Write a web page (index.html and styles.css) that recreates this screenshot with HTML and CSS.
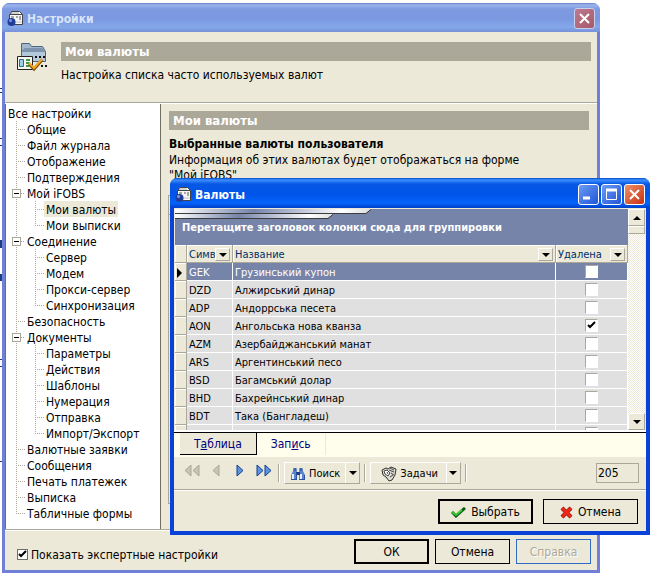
FILE: index.html
```html
<!DOCTYPE html>
<html lang="ru">
<head>
    <meta charset="UTF-8">
    <meta name="viewport" content="width=device-width, initial-scale=1.0">
    <title>Настройки</title>
    <link rel="stylesheet" href="styles.css">
</head>
<body>
    <!-- Bits of the window behind -->
    <svg class="behind" width="2" height="576" viewBox="0 0 2 576">
        <path d="M1 88v1M1 92v1M1 138v1M1 145v1M1 240v8M1 274v7M1 359v1M1 366v1M1 461v1" stroke="#1c3c80" stroke-width="2"/>
    </svg>

    <!-- Settings window -->
    <div class="window settings">
        <div class="titlebar">
            <svg class="app-icon" width="17" height="17" viewBox="0 0 17 17">
                <path d="M3.500 4.500l1-3h8l3 3" fill="#fff" stroke="#444"/>
                <path d="M2.500 4.500h13v10h-13z" fill="#f6f6f6" stroke="#444"/>
                <path d="M5 3h7" stroke="#aaa"/>
                <path d="M4 7h3M9 7h2M12 7h2M12 9h2" stroke="#555"/>
                <path d="M3 12h12" stroke="#c4c4cc"/>
                <circle cx="4.500" cy="12" r="4" fill="#223c98"/>
                <circle cx="3.500" cy="10.500" r="1.500" fill="#7c9ce4"/>
            </svg>
            <h1>Настройки</h1>
            <button class="win-btn close" aria-label="Закрыть"><svg width="13" height="13" viewBox="0 0 13 13"><path d="M2 2l9 9M11 2l-9 9" stroke="#fff" stroke-width="2"/></svg></button>
        </div>

        <div class="header">
            <svg class="header-icon" width="32" height="32" viewBox="0 0 32 32">
                <path d="M5.500 15V1.500h8l2 3h11l3 5v10h-24z" fill="#a4b8cc" stroke="#4b6682"/>
                <path d="M6 8l3-2h17l3 4H6z" fill="#7c94ac"/>
                <path d="M6 10h23v9H6z" fill="#b4c8dc"/>
                <path d="M19 15h2M23 15h2M27 15h2" stroke="#111" stroke-width="2"/>
                <path d="M1.500 14.500h15v13h-15z" fill="#f8f8ee" stroke="#222"/>
                <path d="M3.500 17.500h4v7h-4z" fill="#9cd0e8" stroke="#2c6c8c"/>
                <path d="M10 18h4M10 21h4M10 24h3" stroke="#3c9a4a" stroke-width="2"/>
                <path d="M13 22l5 5 8-9" fill="none" stroke="#7c4c08" stroke-width="3"/>
                <path d="M13 21l5 5 8-9" fill="none" stroke="#f4a824" stroke-width="2"/>
                <path d="M25 24h2M29 24h2" stroke="#111" stroke-width="2"/>
            </svg>
            <div class="header-text">
                <h2 class="caption">Мои валюты</h2>
                <p>Настройка списка часто используемых валют</p>
            </div>
        </div>

        <div class="body">
            <nav class="tree">
                <a href="#" class="root">Все настройки</a>
                <ul>
                    <li><div class="node"><a href="#">Общие</a></div></li>
                    <li><div class="node"><a href="#">Файл журнала</a></div></li>
                    <li><div class="node"><a href="#">Отображение</a></div></li>
                    <li><div class="node"><a href="#">Подтверждения</a></div></li>
                    <li>
                        <div class="node open"><button class="toggle" aria-label="Свернуть"></button><a href="#">Мой iFOBS</a></div>
                        <ul>
                            <li><div class="node"><a href="#" class="current">Мои валюты</a></div></li>
                            <li><div class="node"><a href="#">Мои выписки</a></div></li>
                        </ul>
                    </li>
                    <li>
                        <div class="node open"><button class="toggle" aria-label="Свернуть"></button><a href="#">Соединение</a></div>
                        <ul>
                            <li><div class="node"><a href="#">Сервер</a></div></li>
                            <li><div class="node"><a href="#">Модем</a></div></li>
                            <li><div class="node"><a href="#">Прокси-сервер</a></div></li>
                            <li><div class="node"><a href="#">Синхронизация</a></div></li>
                        </ul>
                    </li>
                    <li><div class="node"><a href="#">Безопасность</a></div></li>
                    <li>
                        <div class="node open"><button class="toggle" aria-label="Свернуть"></button><a href="#">Документы</a></div>
                        <ul>
                            <li><div class="node"><a href="#">Параметры</a></div></li>
                            <li><div class="node"><a href="#">Действия</a></div></li>
                            <li><div class="node"><a href="#">Шаблоны</a></div></li>
                            <li><div class="node"><a href="#">Нумерация</a></div></li>
                            <li><div class="node"><a href="#">Отправка</a></div></li>
                            <li><div class="node"><a href="#">Импорт/Экспорт</a></div></li>
                        </ul>
                    </li>
                    <li><div class="node"><a href="#">Валютные заявки</a></div></li>
                    <li><div class="node"><a href="#">Сообщения</a></div></li>
                    <li><div class="node"><a href="#">Печать платежек</a></div></li>
                    <li><div class="node"><a href="#">Выписка</a></div></li>
                    <li><div class="node"><a href="#">Табличные формы</a></div></li>
                </ul>
            </nav>

            <div class="panel">
                <h2 class="caption">Мои валюты</h2>
                <h3>Выбранные валюты пользователя</h3>
                <p>Информация об этих валютах будет отображаться на форме<br>"Мой iFOBS"</p>
                <div class="list-head"></div>
                <div class="list-box"></div>
            </div>
        </div>

        <div class="footer">
            <label class="expert"><input type="checkbox" class="check" checked>Показать экспертные настройки</label>
            <button class="btn default">ОК</button>
            <button class="btn">Отмена</button>
            <button class="btn help" disabled>Справка</button>
        </div>
    </div>

    <!-- Currency picker, floats over the settings window -->
    <div class="window dialog">
        <div class="titlebar">
            <svg class="app-icon" width="17" height="17" viewBox="0 0 17 17">
                <path d="M3.500 4.500l1-3h8l3 3" fill="#fff" stroke="#444"/>
                <path d="M2.500 4.500h13v10h-13z" fill="#f6f6f6" stroke="#444"/>
                <path d="M5 3h7" stroke="#aaa"/>
                <path d="M4 7h3M9 7h2M12 7h2M12 9h2" stroke="#555"/>
                <path d="M3 12h12" stroke="#c4c4cc"/>
                <circle cx="4.500" cy="12" r="4" fill="#223c98"/>
                <circle cx="3.500" cy="10.500" r="1.500" fill="#7c9ce4"/>
            </svg>
            <h1>Валюты</h1>
            <button class="win-btn" aria-label="Свернуть"><svg width="13" height="13" viewBox="0 0 13 13"><path d="M1 10h7" stroke="#fff" stroke-width="3"/></svg></button>
            <button class="win-btn" aria-label="Развернуть"><svg width="13" height="13" viewBox="0 0 13 13"><path d="M1 2h11" stroke="#fff" stroke-width="3"/><path d="M1.500 2v9.500h10V2" fill="none" stroke="#fff"/></svg></button>
            <button class="win-btn close" aria-label="Закрыть"><svg width="13" height="13" viewBox="0 0 13 13"><path d="M2 2l9 9M11 2l-9 9" stroke="#fff" stroke-width="2"/></svg></button>
        </div>

        <div class="grid">
            <div class="grid-main">
                <div class="group-panel">
                    <svg class="stripes" width="196" height="10" viewBox="0 0 196 10">
                        <defs>
                            <linearGradient id="stripe">
                                <stop offset="0" stop-color="#fff"/>
                                <stop offset="0.400" stop-color="#7684aa"/>
                                <stop offset="0.850" stop-color="#fff"/>
                                <stop offset="1" stop-color="#ddd"/>
                            </linearGradient>
                        </defs>
                        <path d="M0 0h196l-5 4H0z" fill="url(#stripe)"/>
                        <path d="M0 4.500h191l5-4" fill="none" stroke="#3c3c3c"/>
                        <path d="M0 5h158l-5 4H0z" fill="url(#stripe)"/>
                        <path d="M0 9.500h153l5-4" fill="none" stroke="#3c3c3c"/>
                    </svg>
                    Перетащите заголовок колонки сюда для группировки
                </div>
                <table>
                    <colgroup><col class="col-mark"><col class="col-code"><col><col class="col-deleted"></colgroup>
                    <thead>
                        <tr>
                            <th></th>
                            <th><div class="th"><span>Симв</span><button class="drop" aria-label="Фильтр"></button></div></th>
                            <th><div class="th"><span>Название</span><button class="drop" aria-label="Фильтр"></button></div></th>
                            <th><div class="th"><span>Удалена</span><button class="drop" aria-label="Фильтр"></button></div></th>
                        </tr>
                    </thead>
                    <tbody>
                        <tr class="selected"><td class="mark"></td><td>GEK</td><td>Грузинський купон</td><td><input type="checkbox" class="check" aria-label="GEK"></td></tr>
                        <tr><td></td><td>DZD</td><td>Алжирський динар</td><td><input type="checkbox" class="check" aria-label="DZD"></td></tr>
                        <tr><td></td><td>ADP</td><td>Андоррська песета</td><td><input type="checkbox" class="check" aria-label="ADP"></td></tr>
                        <tr><td></td><td>AON</td><td>Ангольська нова кванза</td><td><input type="checkbox" class="check" aria-label="AON" checked></td></tr>
                        <tr><td></td><td>AZM</td><td>Азербайджанський манат</td><td><input type="checkbox" class="check" aria-label="AZM"></td></tr>
                        <tr><td></td><td>ARS</td><td>Аргентинський песо</td><td><input type="checkbox" class="check" aria-label="ARS"></td></tr>
                        <tr><td></td><td>BSD</td><td>Багамський долар</td><td><input type="checkbox" class="check" aria-label="BSD"></td></tr>
                        <tr><td></td><td>BHD</td><td>Бахрейнський динар</td><td><input type="checkbox" class="check" aria-label="BHD"></td></tr>
                        <tr><td></td><td>BDT</td><td>Така (Бангладеш)</td><td><input type="checkbox" class="check" aria-label="BDT"></td></tr>
                        <tr><td></td><td></td><td></td><td><input type="checkbox" class="check" aria-label="Удалена"></td></tr>
                    </tbody>
                </table>
            </div>
            <div class="scrollbar">
                <button class="scroll-btn up" aria-label="Вверх"></button>
                <div class="thumb"></div>
                <div class="track"></div>
                <button class="scroll-btn down" aria-label="Вниз"></button>
            </div>
        </div>

        <div class="tabs">
            <button class="tab active">Т<u>а</u>блица</button>
            <button class="tab">Зап<u>и</u>сь</button>
        </div>

        <div class="toolbar">
            <button class="nav-btn" aria-label="Первая" disabled><svg width="16" height="13" viewBox="0 0 16 13"><path d="M7 1v11L1 6.500zM15 1v11L9 6.500z"/></svg></button>
            <button class="nav-btn" aria-label="Предыдущая" disabled><svg width="16" height="13" viewBox="0 0 16 13"><path d="M11 1v11L5 6.500z"/></svg></button>
            <button class="nav-btn" aria-label="Следующая"><svg width="16" height="13" viewBox="0 0 16 13"><path d="M5 1v11l6-5.500z"/></svg></button>
            <button class="nav-btn" aria-label="Последняя"><svg width="16" height="13" viewBox="0 0 16 13"><path d="M1 1v11l6-5.500zM9 1v11l6-5.500z"/></svg></button>
            <span class="sep"></span>
            <div class="split search">
                <button class="split-main">
                    <svg width="16" height="14" viewBox="0 0 16 14">
                        <path d="M4 1h2l1 4v8H1V8l2-4zM10 1h2l1 3 2 4v5H9V5z" fill="#5c84cc"/>
                        <path d="M6 5h4v3H6z" fill="#1c3c80"/>
                        <path d="M3.500 1h3v3h-3zM9.500 1h3v3h-3z" fill="#3c64ac"/>
                        <path d="M3 7v5M11 7v5" stroke="#e4eeff" stroke-width="2"/>
                        <path d="M1 12.500h6M9 12.500h6M6.500 6v7M14.500 8v5" stroke="#2c50a0"/>
                    </svg>
                    Поиск
                </button>
                <button class="split-drop" aria-label="Поиск: меню"></button>
            </div>
            <span class="sep"></span>
            <div class="split tasks">
                <button class="split-main">
                    <svg width="16" height="16" viewBox="0 0 16 16">
                        <path d="M1 4l4-2 2 1 3-2 5 2-1 6-3 5-3 1-3-4-3-2z" fill="#dcdcd4" stroke="#333"/>
                        <path d="M3 5l3-1 3 3-2 3-3-2z" fill="#fff" stroke="#444"/>
                        <path d="M8 4l5 2M9 2l4 2M10 7l3 2M9 11l3-2M6 6l1 2" stroke="#444"/>
                    </svg>
                    Задачи
                </button>
                <button class="split-drop" aria-label="Задачи: меню"></button>
            </div>
            <span class="sep"></span>
            <input class="count" type="text" value="205" aria-label="Количество" readonly>
        </div>

        <div class="actions">
            <button class="btn default"><svg width="15" height="11" viewBox="0 0 15 11"><path d="M1 5l4 4 9-8" fill="none" stroke="#0c5a14" stroke-width="3"/><path d="M1 5l4 3 6-5" fill="none" stroke="#3cc832" stroke-width="2"/></svg>Выбрать</button>
            <button class="btn"><svg width="13" height="13" viewBox="0 0 13 13"><path d="M2 2l9 9M11 2l-9 9" stroke="#7a0c04" stroke-width="4"/><path d="M2 2l9 9M11 2l-9 9" stroke="#f02818" stroke-width="3"/></svg>Отмена</button>
        </div>
    </div>
</body>
</html>
```
FILE: styles.css
```css
/* Global Styles */
* {
    box-sizing: border-box;
}

body {
    margin: 0;
    background: #fff;
    color: #000;
    font-family: "DejaVu Sans Condensed", Tahoma, "Noto Sans", sans-serif;
    font-size: 12px;
    line-height: 16px;
}

h1, h2, h3, p, ul {
    margin: 0;
    padding: 0;
}

button, input {
    font: inherit;
    color: inherit;
    margin: 0;
    padding: 0;
}

a {
    color: inherit;
    text-decoration: none;
}

svg {
    flex: none;
}

.behind {
    position: absolute;
    top: 0;
    left: 0;
}

/* Windows */
.window {
    background: #ece9d8;
    border-radius: 8px 8px 0 0;
}

.settings {
    margin: 3px 53px 0 2px;
    border: 3px solid #7080d8;
    border-top: none;
}

.dialog {
    position: absolute;
    top: 178px;
    left: 170px;
    right: 3px;
    border: 4px solid #0842d8;
    border-top: none;
}

.titlebar {
    display: flex;
    align-items: center;
    gap: 2px;
    height: 29px;
    margin: 0 -3px;
    padding: 2px 5px 0 5px;
    border-radius: 7px 7px 0 0;
    color: #d8e4f8;
    background: linear-gradient(#6a82cc, #9cb6ee 2px, #7e9ae0 6px, #7b97e0 16px, #84a8ea 24px, #7890d8);
}

.titlebar h1 {
    flex: 1;
    padding: 1px 0 0 1px;
    font-size: 12px;
}

.dialog .titlebar {
    height: 30px;
    margin: 0 -4px;
    color: #fff;
    background: linear-gradient(#0848c8, #3c90ff 2px, #0858e4 6px, #0054e8 16px, #0464fc 25px, #0040c8);
}

.win-btn {
    display: flex;
    align-items: center;
    justify-content: center;
    width: 21px;
    height: 21px;
    border: 1px solid #fff;
    border-radius: 3px;
    background: linear-gradient(135deg, #6c9cf4, #2054d8);
}

.win-btn.close {
    background: linear-gradient(135deg, #f0906c, #c83010);
}

.settings .win-btn.close {
    border-color: #c8d0f0;
    background: linear-gradient(135deg, #bc7c90, #a85868);
}

/* Header */
.header {
    display: flex;
    gap: 13px;
    padding: 10px 6px 19px 11px;
    border-bottom: 1px solid #aca899;
}

.header-text {
    flex: 1;
}

.header-text p {
    padding: 6px 0 0;
}

.caption {
    height: 19px;
    padding-left: 4px;
    background: #aca899;
    color: #fff;
    font-size: 13px;
    line-height: 19px;
}

/* Body */
.body {
    display: flex;
    border-top: 1px solid #fff;
    border-bottom: 1px solid #aca899;
}

.tree {
    flex: none;
    width: 156px;
    padding: 1px 0 8px 1px;
    background: #fff;
    border-left: 1px solid #716f64;
    border-right: 1px solid #716f64;
    white-space: nowrap;
}

.root {
    display: block;
    padding-left: 1px;
}

.tree ul {
    list-style: none;
    margin-left: 9px;
}

.tree ul ul {
    margin-left: 19px;
}

.tree li {
    background: repeating-linear-gradient(#aca899 0 1px, #fff 1px 2px) 0 0 / 1px 100% no-repeat;
}

.tree li:last-child {
    background-size: 1px 8px;
}

.node {
    display: flex;
    align-items: center;
    height: 16px;
}

.node::before {
    content: "";
    width: 9px;
    height: 1px;
    background: repeating-linear-gradient(90deg, #aca899 0 1px, #fff 1px 2px);
}

.node.open::before {
    order: 1;
    width: 4px;
}

.root, .node a {
    height: 16px;
    line-height: 18px;
}

.node a {
    order: 2;
    padding: 0 2px;
}

.node .current {
    background: #ece9d8;
}

.toggle {
    width: 9px;
    height: 9px;
    margin-left: -4px;
    border: 1px solid #aca899;
    background: linear-gradient(#000, #000) center / 5px 1px no-repeat #fff;
}

.panel {
    display: flex;
    flex-direction: column;
    flex: 1;
    padding: 7px 8px 25px;
}

.panel h3 {
    padding-top: 6px;
    font-size: 12px;
    line-height: 17px;
}

.panel p {
    line-height: 15px;
}

.list-head {
    height: 20px;
    margin: 12px 0 0 -1px;
    border: 1px solid #aca899;
}

.list-box {
    flex: 1;
    margin-left: -1px;
    border: 1px solid #aca899;
    border-top: none;
}

/* Buttons and check boxes */
.footer {
    display: flex;
    align-items: center;
    gap: 6px;
    padding: 8px 6px 6px 12px;
    border-top: 1px solid #fff;
}

.expert {
    display: flex;
    align-items: center;
    gap: 3px;
    flex: 1;
    padding-top: 6px;
}

.check {
    appearance: none;
    flex: none;
    width: 11px;
    height: 11px;
    border: 1px solid #716f64;
    background: #fff;
}

.check:checked {
    background: #fff url("data:image/svg+xml,%3Csvg xmlns='http://www.w3.org/2000/svg' viewBox='0 0 9 9'%3E%3Cpath d='M1 4l2 2 5-5' fill='none' stroke='%23000' stroke-width='2'/%3E%3C/svg%3E") center / 9px 9px no-repeat;
}

.btn {
    display: flex;
    align-items: center;
    justify-content: center;
    gap: 5px;
    width: 75px;
    height: 25px;
    padding-top: 1px;
    border: 1px solid #000;
    background: #ece9d8;
}

.btn.default {
    border-width: 2px;
}

.btn.help {
    border-color: #316ac5;
    color: #aca899;
    text-shadow: 1px 1px #fff;
}

/* Currency grid */
.grid {
    display: flex;
    height: 224px;
    padding: 1px 1px 0;
    border-bottom: 2px solid #fff;
    overflow: hidden;
    font-size: 11px;
}

.grid-main {
    flex: 1;
    overflow: hidden;
}

.group-panel {
    position: relative;
    height: 36px;
    padding: 11px 7px 0;
    background: #7684aa;
    color: #fff;
    font-weight: bold;
}

.stripes {
    position: absolute;
    top: 0;
    left: 0;
}

table {
    width: 100%;
    table-layout: fixed;
    border-collapse: separate;
    border-spacing: 0;
}

.col-mark {
    width: 12px;
}

.col-code {
    width: 46px;
}

.col-deleted {
    width: 72px;
}

th, td {
    height: 18px;
    padding: 2px 2px 0;
    line-height: 15px;
    text-align: left;
    white-space: nowrap;
    overflow: hidden;
}

th {
    border-right: 1px solid #aca899;
    border-bottom: 1px solid #aca899;
    background: #ece9d8;
    box-shadow: inset 1px 1px #fff;
    color: #003068;
    font-weight: normal;
}

.th {
    display: flex;
    align-items: center;
}

.th span {
    flex: 1;
    overflow: hidden;
}

.drop {
    flex: none;
    width: 15px;
    height: 13px;
    border: 1px solid;
    border-color: #fff #aca899 #aca899 #fff;
    background: #ece9d8;
}

td {
    border-right: 1px solid #fff;
    border-bottom: 1px solid #fff;
    background: #e0e0e0;
}

td:first-child {
    border-color: #aca899;
    background: #ece9d8;
    box-shadow: inset 1px 1px #fff;
}

td .check {
    display: block;
    width: 13px;
    height: 13px;
    margin: 0 auto 2px;
    border-color: #aca899 #fff #fff #aca899;
}

.selected td:not(:first-child) {
    background: #7684aa;
    color: #fff;
}

.mark::before {
    content: "";
    display: block;
    width: 5px;
    border: 5px solid transparent;
    border-left-color: #000;
    border-right: none;
}

.scrollbar {
    display: flex;
    flex-direction: column;
    width: 17px;
}

.scroll-btn, .thumb {
    height: 17px;
    border: 1px solid;
    border-color: #fff #aca899 #aca899 #fff;
    background: #ece9d8;
}

.thumb {
    height: 8px;
}

.track {
    flex: 1;
    background: repeating-conic-gradient(#fff 0 25%, #ece9d8 0 50%) 0 0 / 2px 2px;
}

.drop, .scroll-btn, .split-drop {
    display: flex;
    align-items: center;
    justify-content: center;
}

.drop::before, .scroll-btn::before, .split-drop::before {
    content: "";
    border: 4px solid transparent;
    border-top-color: #000;
    border-bottom: none;
}

.scroll-btn.up::before {
    border-top: none;
    border-bottom: 4px solid #000;
}

/* Tabs */
.tabs {
    display: flex;
    height: 25px;
    padding-left: 6px;
    border-top: 1px solid #000;
    background: #fffeec;
}

.tab {
    height: 22px;
    padding: 0 14px;
    border: none;
    border-right: 1px solid #ece9d8;
    background: none;
    color: #000080;
    line-height: 18px;
}

.tab.active {
    border-right: 1px solid #000;
    border-bottom: 1px solid #000;
    background: #ece9d8;
}

/* Toolbar */
.toolbar {
    display: flex;
    align-items: center;
    gap: 4px;
    height: 33px;
    padding: 0 7px 0 8px;
    border-bottom: 1px solid #aca899;
    font-size: 11px;
}

.nav-btn {
    width: 20px;
    height: 20px;
    border: none;
    background: none;
}

.nav-btn path {
    fill: #5c94e0;
    stroke: #143c8c;
}

.nav-btn:disabled path {
    fill: #c8c4b4;
    stroke: #aca899;
}

.sep {
    width: 2px;
    height: 18px;
    border-left: 1px solid #aca899;
    border-right: 1px solid #fff;
}

.split {
    display: flex;
    height: 22px;
    border: 1px solid;
    border-color: #fff #aca899 #aca899 #fff;
}

.split-main {
    display: flex;
    align-items: center;
    gap: 3px;
    padding: 1px 5px 0;
    border: none;
    background: none;
}

.split-drop {
    width: 14px;
    border: none;
    border-left: 1px solid #fff;
    background: none;
}

.tasks .split-main {
    padding-left: 10px;
    padding-right: 8px;
}

.count {
    width: 43px;
    height: 20px;
    margin-left: auto;
    padding: 0 1px;
    border: 1px solid #aca899;
    background: #ece9d8;
    font-size: 12px;
}

.actions {
    display: flex;
    justify-content: flex-end;
    gap: 10px;
    padding: 8px 8px 7px;
    border-top: 1px solid #fff;
}

.actions .btn {
    width: 95px;
}
```
